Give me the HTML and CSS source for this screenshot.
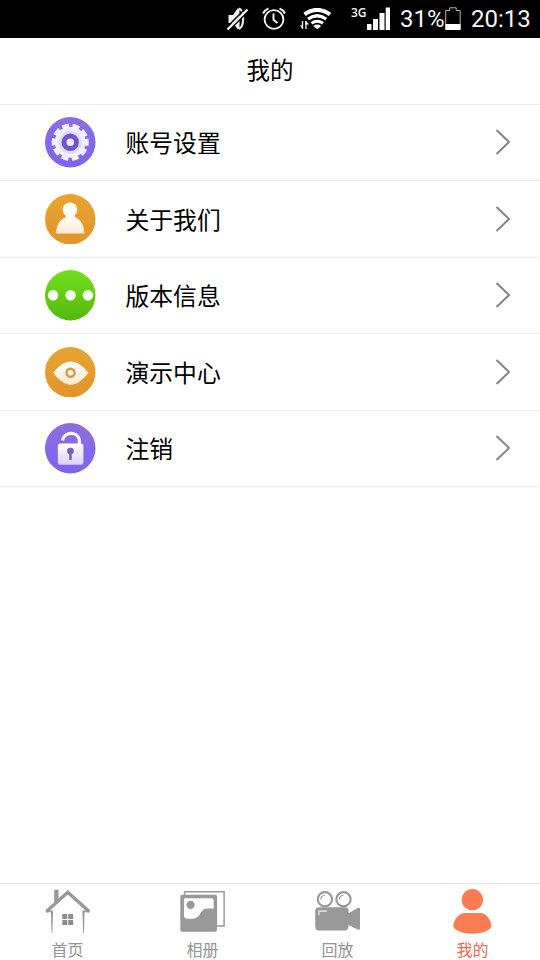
FILE: index.html
```
<!DOCTYPE html>
<html lang="zh-CN">
<head>
<meta charset="utf-8">
<title>我的</title>
<link rel="stylesheet" href="styles.css">
</head>
<body>
<div class="app">
  <div class="status">
    <svg class="mute" width="24" height="26" viewBox="0 0 24 26">
      <path d="M2.500 9h4.500L11.500 2.500l2 0v20.500h-2L7 17H2.500z" fill="#f2f2f2"/>
      <path d="M13 2.500c5.500 2 5.500 18 0 20.500" fill="none" stroke="#e4e4e4" stroke-width="2.200"/>
      <path d="M2.500 25L22.500 5M0 22L20 2" stroke="#000" stroke-width="1.500"/>
      <path d="M1.500 23.500L21.500 3.500" stroke="#f2f2f2" stroke-width="2.300"/>
    </svg>
    <svg class="alarm" width="24" height="24" viewBox="0 0 24 24" fill="none" stroke="#f2f2f2">
      <circle cx="12" cy="12.500" r="9.400" stroke-width="1.900"/>
      <path d="M11.500 6.500v6.300l4 3.300" stroke-width="2"/>
      <path d="M1 6.500Q2.500 3 6.500 1.300M17.500 1.300Q21.500 3 23 6.500" stroke-width="2"/>
    </svg>
    <svg class="wifi" width="33" height="24" viewBox="0 0 33 24" fill="none" stroke="#fff">
      <path d="M4.500 6.300Q17 -2.600 30 6.300" stroke-width="4"/>
      <path d="M8 11Q17.200 4.500 26.300 11" stroke-width="3.200"/>
      <path d="M11.500 15.300Q17.200 11.200 23 15.300" stroke-width="3"/>
      <path d="M13.300 18Q17.200 15.200 21.200 18L17.300 21.300z" fill="#fff" stroke="none"/>
      <path d="M2.500 13v8M6 13v8" stroke-width="1.300"/>
      <path d="M0 17.500h3v4zM5.500 12.500l3.500 4h-3.500z" fill="#fff" stroke="none"/>
    </svg>
    <span class="net">3G</span>
    <svg class="signal" width="23" height="24" viewBox="0 0 23 24" fill="#fff">
      <path d="M0 17h4.500v6H0zM6 12h5v11H6zM12.500 6h5v17h-5zM18.700 0.500h4.300v22.500h-4.300z"/>
    </svg>
    <span class="percent">31%</span>
    <svg class="battery" width="16" height="24" viewBox="0 0 16 24">
      <path d="M.7 22.500V3.500h4V.8h6.500v2.700h4v19z" fill="none" stroke="#b5b5b5"/>
      <path d="M.5 17h15v6H.5z" fill="#fff"/>
    </svg>
    <span class="clock">20:13</span>
  </div>
  <header class="title">我的</header>
  <main class="list">
    <a class="row">
      <svg class="icon" viewBox="0 0 50 50">
        <defs>
          <linearGradient id="violet" x2="0" y2="1"><stop stop-color="#8b6fe0"/><stop offset="1" stop-color="#8062f0"/></linearGradient>
          <linearGradient id="pale" x2="0" y2="1"><stop stop-color="#fff"/><stop offset="1" stop-color="#d9d2fa"/></linearGradient>
          <linearGradient id="amber" x2="0" y2="1"><stop stop-color="#e6a52f"/><stop offset="1" stop-color="#e4942a"/></linearGradient>
          <linearGradient id="cream" x2="0" y2="1"><stop stop-color="#fff"/><stop offset="1" stop-color="#fcead0"/></linearGradient>
          <linearGradient id="green" x2="0" y2="1"><stop stop-color="#71e01e"/><stop offset="1" stop-color="#55b80b"/></linearGradient>
        </defs>
        <circle cx="25" cy="25" r="25" fill="url(#violet)"/>
        <circle cx="25" cy="25" r="15.300" fill="#f3f0fe"/>
        <circle cx="25" cy="25" r="16.300" fill="none" stroke="#f3f0fe" stroke-width="4.200" stroke-dasharray="6.900 3.342" transform="rotate(-12 25 25)"/>
        <circle cx="25" cy="25" r="11.500" fill="#e2dcf9"/>
        <circle cx="25" cy="25" r="8.600" fill="#7354c9"/>
        <circle cx="25" cy="25" r="3.700" fill="#eeeaff"/>
      </svg>
      <span class="label">账号设置</span>
      <svg class="arrow" viewBox="0 0 16 26"><path d="M1.500 1L14 13 1.500 25"/></svg>
    </a>
    <a class="row">
      <svg class="icon" viewBox="0 0 50 50">
        <circle cx="25" cy="25" r="25" fill="url(#amber)"/>
        <path d="M20.500 20h8.500l1 3.300c5 1.700 9 8 9 15.700H11c0-7.700 4-14 9.500-15.700z" fill="url(#cream)"/>
        <circle cx="24.700" cy="15.500" r="7.200" fill="#fffdf8"/>
      </svg>
      <span class="label">关于我们</span>
      <svg class="arrow" viewBox="0 0 16 26"><path d="M1.500 1L14 13 1.500 25"/></svg>
    </a>
    <a class="row">
      <svg class="icon" viewBox="0 0 50 50">
        <circle cx="25" cy="25" r="25" fill="url(#green)"/>
        <g fill="#fbfff5"><circle cx="8" cy="25" r="5.200"/><circle cx="25.300" cy="25" r="5.200"/><circle cx="42.500" cy="25" r="5.200"/></g>
      </svg>
      <span class="label">版本信息</span>
      <svg class="arrow" viewBox="0 0 16 26"><path d="M1.500 1L14 13 1.500 25"/></svg>
    </a>
    <a class="row">
      <svg class="icon" viewBox="0 0 50 50">
        <circle cx="25" cy="25" r="25" fill="url(#amber)"/>
        <path d="M8 25.500C14 18 20 14.300 25.500 14.300S37 18 43 25.500C37 33.500 31 37.300 25.500 37.300S14 33.500 8 25.500z" fill="url(#cream)"/>
        <circle cx="25.300" cy="25.500" r="4" fill="#fff6e6" stroke="#d99a3e" stroke-width="2.400"/>
      </svg>
      <span class="label">演示中心</span>
      <svg class="arrow" viewBox="0 0 16 26"><path d="M1.500 1L14 13 1.500 25"/></svg>
    </a>
    <a class="row">
      <svg class="icon" viewBox="0 0 50 50">
        <circle cx="25" cy="25" r="25" fill="url(#violet)"/>
        <path d="M17.300 17.300a8.600 8.600 0 0 1 16.700-1v6" fill="none" stroke="#faf8ff" stroke-width="3.200"/>
        <rect x="12.700" y="20.300" width="25.300" height="21" rx="2.500" fill="url(#pale)"/>
        <circle cx="25.200" cy="27.800" r="3.300" fill="#7460b8"/>
        <path d="M25.200 28v8.500" stroke="#7460b8" stroke-width="2.500"/>
      </svg>
      <span class="label">注销</span>
      <svg class="arrow" viewBox="0 0 16 26"><path d="M1.500 1L14 13 1.500 25"/></svg>
    </a>
  </main>
  <nav class="tabs">
    <a class="tab">
      <svg class="tab-icon" viewBox="0 0 46 46">
        <path d="M9.300 14V.8h4.400v9z" fill="#999"/>
        <path d="M1.200 23L23 3.200 44.800 23" fill="none" stroke="#999" stroke-width="3.400"/>
        <path d="M1 22.700h7M38 22.700h7" stroke="#999" stroke-width="1.700"/>
        <path d="M6 23h2.200l-.8 21.500h-.8zM37.800 23h2.200l-.6 21.500h-.8z" fill="#999"/>
        <path d="M17.500 25.300h5v5h-5zM23.500 25.300h5v5h-5zM17.500 31.300h5v5h-5zM23.500 31.300h5v5h-5z" fill="#8e8e8e"/>
      </svg>
      <span>首页</span>
    </a>
    <a class="tab">
      <svg class="tab-icon" viewBox="0 0 46 46">
        <path d="M4.600 6V2.700h40v34.600H37" fill="none" stroke="#999" stroke-width="1.500"/>
        <rect x=".3" y="5.800" width="37.200" height="37.300" rx="2" fill="#999"/>
        <path d="M4 9.300h28q2 0 2 2v8.400h-7c-6.500 0-6 10.300-14 10.300H7.500Q4 30 4 26z" fill="#fff"/>
        <circle cx="10.700" cy="16" r="4.200" fill="#999"/>
      </svg>
      <span>相册</span>
    </a>
    <a class="tab">
      <svg class="tab-icon" viewBox="0 0 46 46">
        <g fill="#fff" stroke="#999"><circle cx="10" cy="10.300" r="7.200" stroke-width="2.200"/><circle cx="28.800" cy="10.300" r="7.200" stroke-width="2.200"/></g>
        <path d="M5.800 10.500Q6.200 6.500 10 6.300M24.600 10.500Q25 6.500 28.800 6.300" fill="none" stroke="#999" stroke-width="1.200"/>
        <path d="M4 18.500h26.500q3.500 0 3.500 4v2L43 19.300h2.500V41H43l-9-4.500q0 5.500-3.500 5.500H4q-3.800 0-3.800-4V22.500Q.2 18.500 4 18.500z" fill="#999"/>
        <path d="M4 26.500v-4.200h8" fill="none" stroke="#f2f2f2" stroke-width="1.200"/>
      </svg>
      <span>回放</span>
    </a>
    <a class="tab active">
      <svg class="tab-icon" viewBox="0 0 46 46" fill="#fb7b52">
        <circle cx="22.600" cy="10.800" r="10.800"/>
        <path d="M15 24.300h15.500C37 24.300 41.800 32 41.800 37.500c0 3.500-8 7.800-19.200 7.800S3.300 41 3.300 37.500C3.300 32 8.500 24.300 15 24.300z"/>
      </svg>
      <span>我的</span>
    </a>
  </nav>
</div>
</body>
</html>
```
FILE: styles.css
```
* {
  box-sizing: border-box;
}

body {
  margin: 0;
  font-family: "Noto Sans CJK SC", sans-serif;
  color: #000;
  background: #fff;
}

svg {
  display: block;
  flex: none;
}

.app {
  display: flex;
  flex-direction: column;
  width: 540px;
  height: 960px;
}

.status {
  display: flex;
  align-items: center;
  flex: none;
  height: 37.5px;
  padding-left: 226px;
  background: #000;
  color: #f5f5f5;
  font: 24px/38px Roboto, sans-serif;
  white-space: nowrap;
}

.alarm {
  margin-left: 12px;
}

.wifi {
  margin-left: 14px;
  margin-top: 3px;
}

.net {
  width: 16px;
  margin: 0 0 11px 18px;
  font: 600 12px/14px "Open Sans", sans-serif;
}

.percent {
  width: 45px;
  margin-left: 10px;
  font-size: 24px;
}

.clock {
  margin-left: 10px;
}

.title {
  flex: none;
  height: 67px;
  border-bottom: 1.5px solid #e7e7e7;
  font-size: 23.5px;
  line-height: 63px;
  text-align: center;
}

.list {
  flex: 1;
}

.row {
  display: flex;
  align-items: center;
  height: 76.5px;
  padding: 0 29px 0 45px;
  border-bottom: 1.5px solid #e9e9e9;
}

.icon {
  width: 50.5px;
  height: 50.5px;
}

.label {
  flex: 1;
  margin-left: 30px;
  font-size: 23.8px;
  line-height: 36px;
}

.arrow {
  width: 16px;
  height: 26px;
  fill: none;
  stroke: #858585;
  stroke-width: 2;
}

.tabs {
  display: flex;
  flex: none;
  height: 77px;
  border-top: 1.5px solid #e7e7e7;
}

.tab {
  display: flex;
  flex: 1;
  flex-direction: column;
  align-items: center;
  padding-top: 4.5px;
  color: #949494;
  font-size: 16px;
  line-height: 24px;
}

.tab-icon {
  width: 45.5px;
  height: 45.5px;
  margin-bottom: 3px;
}

.active {
  color: #e8694f;
}
```
